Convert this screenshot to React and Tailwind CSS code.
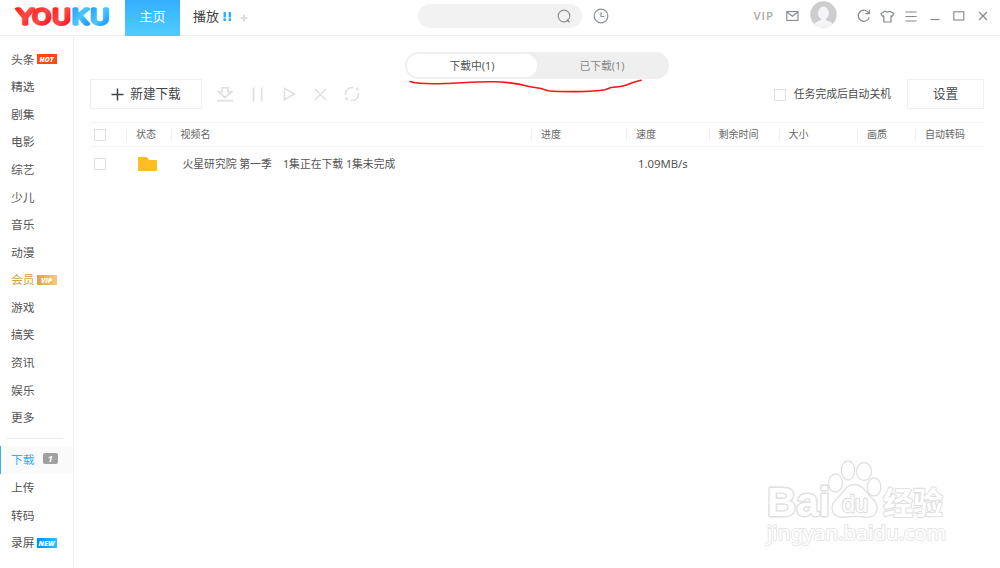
import React, { useState } from 'react';

const CHANNELS = [
    { name: '头条', tag: 'HOT' },
    { name: '精选' },
    { name: '剧集' },
    { name: '电影' },
    { name: '综艺' },
    { name: '少儿' },
    { name: '音乐' },
    { name: '动漫' },
    { name: '会员', tag: 'VIP' },
    { name: '游戏' },
    { name: '搞笑' },
    { name: '资讯' },
    { name: '娱乐' },
    { name: '更多' },
];

const TOOLS = [
    { name: '下载', count: 1 },
    { name: '上传' },
    { name: '转码' },
    { name: '录屏', tag: 'NEW' },
];

const COLUMNS = ['状态', '视频名', '进度', '速度', '剩余时间', '大小', '画质', '自动转码'];

const TAG_COLORS = {
    HOT: 'bg-[#ff4a12]',
    VIP: 'bg-linear-to-r from-[#dba53c] to-[#f9cb72]',
    NEW: 'bg-linear-to-r from-[#008cff] to-[#2fc0ff]',
};

const GRID = 'grid grid-cols-[36px_44.5px_360.5px_95px_82.5px_70px_78.5px_58px_69px] items-center';

function Logo() {
    return (
        <svg width="98" height="22" viewBox="0 0 98 22" className="ml-[13px] shrink-0">
            <defs>
                <linearGradient id="red" x1="0" y1="0" x2="1" y2="1">
                    <stop offset="0" stopColor="#ff1a12" />
                    <stop offset="0.5" stopColor="#ff4a4a" />
                    <stop offset="1" stopColor="#f5000c" />
                </linearGradient>
                <linearGradient id="blue" x1="0" y1="0" x2="1" y2="1">
                    <stop offset="0" stopColor="#169bff" />
                    <stop offset="0.5" stopColor="#4bc6ff" />
                    <stop offset="1" stopColor="#1088ff" />
                </linearGradient>
            </defs>
            <g fontFamily="Inter, sans-serif" fontSize="19.5" fontWeight="300" strokeWidth="3.3" strokeLinejoin="round" strokeLinecap="round">
                <text x="3.5" y="18.5" textLength="17.5" lengthAdjust="spacingAndGlyphs" fill="url(#red)" stroke="url(#red)">Y</text>
                <text x="19.5" y="18.5" textLength="18.5" lengthAdjust="spacingAndGlyphs" fill="url(#red)" stroke="url(#red)">O</text>
                <text x="39.5" y="18.5" textLength="18" lengthAdjust="spacingAndGlyphs" fill="url(#red)" stroke="url(#red)">U</text>
                <text x="59" y="18.5" textLength="16.5" lengthAdjust="spacingAndGlyphs" fill="url(#blue)" stroke="url(#blue)">K</text>
                <text x="77.5" y="18.5" textLength="18.5" lengthAdjust="spacingAndGlyphs" fill="url(#blue)" stroke="url(#blue)">U</text>
            </g>
        </svg>
    );
}

function NavItem({ name, tag, count }) {
    const color = count ? 'text-[#35b0fb]' : tag === 'VIP' ? 'text-[#d8a13a]' : 'text-[#555]';
    return (
        <a className={`flex h-[27.6px] items-center pl-[11px] text-[11.8px] ${color}`}>
            {name}
            {tag && (
                <span className={`ml-0.5 flex h-2.5 w-5 items-center justify-center font-['Open_Sans'] text-[7px] leading-none font-extrabold italic text-white ${TAG_COLORS[tag]}`}>
                    {tag}
                </span>
            )}
            {count && (
                <span className="mb-0.5 ml-[8px] flex h-[11px] w-[15px] items-center justify-center rounded-[2px] bg-[#a0a0a0] font-['Open_Sans'] text-[9px] leading-none font-bold italic text-white">
                    {count}
                </span>
            )}
        </a>
    );
}

function Checkbox() {
    return <span className="block size-3 shrink-0 border border-[#dde1e1] bg-white" />;
}

function Header() {
    return (
        <header className="flex h-9 items-center border-b border-[#f1f1f1]">
            <div className="flex h-9 w-[125px] shrink-0 items-center pb-1">
                <Logo />
            </div>
            <div className="flex h-9 w-[55px] shrink-0 items-center justify-center bg-linear-to-b from-[#34b0ff] to-[#50ccff] pb-[2px] text-[13px] text-white">
                主页
            </div>
            <div className="flex w-[238px] shrink-0 items-center pb-[2px] pl-[13px] text-[13px] text-[#444]">
                播放
                <svg width="9" height="9" viewBox="0 0 9 9" className="ml-1" fill="none" stroke="#25b1ff" strokeWidth="2.4">
                    <path d="M1.7 0V9M6.8 0V9" strokeDasharray="5.5 0.7" />
                </svg>
                <svg width="8" height="8" viewBox="0 0 8 8" className="ml-2 mt-0.5" stroke="#d3d6da" strokeWidth="1.6">
                    <path d="M4 .5V7.5M.5 4H7.5" />
                </svg>
            </div>
            <div className="mb-1 flex h-6 w-[164px] shrink-0 items-center justify-end rounded-full bg-[#f2f2f2] pr-[11px]">
                <svg width="14" height="14" viewBox="0 0 14 14" fill="none" stroke="#8d9194" strokeWidth="1.2">
                    <circle cx="7" cy="7" r="5.8" />
                    <path d="M9.6 10.6L12.5 13.2" strokeWidth="1.5" />
                </svg>
            </div>
            <svg width="16" height="16" viewBox="0 0 16 16" className="mb-1 ml-[11px] shrink-0" fill="none" stroke="#8d9194" strokeWidth="1.2">
                <circle cx="8" cy="8" r="6.8" />
                <path d="M8 4.2V8.5H11.4" />
            </svg>
            <div className="mb-[3px] ml-auto flex shrink-0 items-center text-[#84888b]">
                <span className="font-['Open_Sans'] text-[11.5px] font-semibold tracking-[0.9px] text-[#a9a9a9]">VIP</span>
                <svg width="13" height="10" viewBox="0 0 13 10" className="ml-3" fill="none" stroke="currentColor" strokeWidth="1.1">
                    <rect x=".8" y=".6" width="11.2" height="8.8" />
                    <path d="M1 1L6.4 5.3L11.8 1" />
                </svg>
                <svg width="27" height="27" viewBox="0 0 27 27" className="-my-1 -mt-2 ml-[11px]">
                    <defs>
                        <clipPath id="avatar"><circle cx="13.5" cy="13.5" r="13.2" /></clipPath>
                    </defs>
                    <g clipPath="url(#avatar)">
                        <rect width="27" height="27" fill="#cdcdcd" />
                        <ellipse cx="13.5" cy="12.2" rx="5.4" ry="6.6" fill="#f4f4f6" />
                        <path d="M11 16H16V19L21.5 21.6Q23 22.6 23 27H4Q4 22.6 5.5 21.6L11 19Z" fill="#f4f4f6" />
                    </g>
                </svg>
                <svg width="14" height="14" viewBox="0 0 14 14" className="ml-5" fill="none" stroke="currentColor" strokeWidth="1.2">
                    <path d="M11.7 4A5.6 5.6 0 1 0 12.2 8.4" />
                    <path d="M12.3 .8V4.7H8.4" />
                </svg>
                <svg width="15" height="13" viewBox="0 0 15 13" className="ml-[9px]" fill="none" stroke="currentColor" strokeWidth="1.2" strokeLinejoin="round">
                    <path d="M5 1.2Q7.4 3 9.8 1.2L13.8 3.6L12.4 6.2L11 5.8V12H3.8V5.8L2.4 6.2L1 3.6Z" />
                </svg>
                <svg width="12" height="11" viewBox="0 0 12 11" className="ml-[10px]" stroke="currentColor" strokeWidth="1.1">
                    <path d="M.5 1H11.5M.5 5.5H11.5M.5 10H11.5" />
                </svg>
                <svg width="10" height="11" viewBox="0 0 10 11" className="ml-[13px]" stroke="currentColor" strokeWidth="1.2">
                    <path d="M.5 8.5H9.5" />
                </svg>
                <svg width="12" height="10" viewBox="0 0 12 10" className="ml-[13px]" fill="none" stroke="currentColor" strokeWidth="1.1">
                    <rect x=".8" y=".8" width="10" height="8.2" />
                </svg>
                <svg width="10" height="10" viewBox="0 0 10 10" className="ml-[13px] mr-3" stroke="currentColor" strokeWidth="1.2">
                    <path d="M1 1L9 9M9 1L1 9" />
                </svg>
            </div>
        </header>
    );
}

function Toolbar() {
    return (
        <div className="flex h-[30px] items-center">
            <button className="flex h-[30px] w-28 items-center justify-center border border-[#f0f0f0] pt-px text-[12.6px] text-[#3f4448]">
                <svg width="13" height="13" viewBox="0 0 13 13" className="mr-1.5" stroke="#3f4448" strokeWidth="1.5">
                    <path d="M6.5 .5V12.5M.5 6.5H12.5" />
                </svg>
                新建下载
            </button>
            <div className="flex items-center text-[#e0e0e0]">
                <svg width="18" height="16" viewBox="0 0 18 16" className="ml-[13.5px]" fill="none" stroke="currentColor" strokeWidth="1.7">
                    <path d="M6 1.8H12V5.8H15.5L9 11.5L2.5 5.8H6Z" />
                    <path d="M1 14.7H17" />
                </svg>
                <svg width="12" height="15" viewBox="0 0 12 15" className="ml-[18px]" stroke="currentColor" strokeWidth="1.7">
                    <path d="M1.5 .5V14.5M9.7 .5V14.5" />
                </svg>
                <svg width="13" height="14" viewBox="0 0 13 14" className="ml-[19.5px]" fill="none" stroke="currentColor" strokeWidth="1.6">
                    <path d="M1.5 1.4L11.5 7L1.5 12.6Z" />
                </svg>
                <svg width="13" height="13" viewBox="0 0 13 13" className="ml-[18px]" stroke="currentColor" strokeWidth="1.6">
                    <path d="M1 1L12 12M12 1L1 12" />
                </svg>
                <svg width="16" height="16" viewBox="0 0 16 16" className="ml-[17px]" fill="none" stroke="currentColor" strokeWidth="1.6">
                    <path d="M1.5 8.8A6.5 6.5 0 0 1 9.2 1.6M14.5 7.2A6.5 6.5 0 0 1 6.8 14.4" />
                    <path d="M1.7 12L3.6 13.9M12.4 2.100L14.300 4" strokeWidth="2.4" />
                </svg>
            </div>
            <label className="ml-auto flex items-center gap-2 pt-px text-[10.8px] text-[#4b4b4b]">
                <Checkbox />
                任务完成后自动关机
            </label>
            <button className="ml-4 h-[30px] w-[77px] border border-[#f0f0f0] pt-px text-[12.6px] text-[#4b4f53]">设置</button>
        </div>
    );
}

function Watermark() {
    return (
        <svg width="190" height="96" viewBox="0 0 190 96" className="pointer-events-none absolute left-[762px] top-[456px]" fill="#fff" stroke="#e0e0e0" strokeLinejoin="round">
            {/* wide grey outline below, white body painted over it */}
            <g fontWeight="700" strokeWidth="2.8" paintOrder="stroke">
                <text x="5" y="60" fontSize="40" fontFamily="'Liberation Sans', sans-serif" textLength="63" lengthAdjust="spacingAndGlyphs">Bai</text>
                <text x="121" y="58" fontSize="31" fontFamily="'Noto Sans CJK SC', sans-serif" textLength="60" lengthAdjust="spacingAndGlyphs" strokeWidth="2.2">经验</text>
            </g>
            <g strokeWidth="1.3">
                <ellipse cx="73.5" cy="27" rx="7" ry="9" />
                <ellipse cx="86" cy="14.5" rx="6.8" ry="9.5" />
                <ellipse cx="102" cy="15.5" rx="7.5" ry="9" />
                <ellipse cx="112" cy="31" rx="6.8" ry="9" />
                <path d="M92.5 28.5C99 28.5 103 34 107 39C112 44 116 47 115 54C114 60 108 62 101 61C95 60 91 60 85 61C77 62 70 60 70 52C70 45 76 42 80 37C84 32 86 28.5 92.5 28.5Z" />
            </g>
            <text x="80" y="56" fontSize="24" fontFamily="'Liberation Sans', sans-serif" textLength="26" lengthAdjust="spacingAndGlyphs" strokeWidth="2.4" paintOrder="stroke">du</text>
            <text x="5" y="84" fontSize="20" fontFamily="'Noto Sans', sans-serif" textLength="179" lengthAdjust="spacingAndGlyphs" strokeWidth="1.9" stroke="#e6e6e6" paintOrder="stroke">jingyan.baidu.com</text>
        </svg>
    );
}

export default function App() {
    const [tab, setTab] = useState('downloading');

    return (
        <div className="relative flex h-[568px] w-[1000px] flex-col overflow-hidden bg-white font-['Noto_Sans','Noto_Sans_CJK_SC',sans-serif]">
            <Header />
            <div className="flex flex-1">
                <nav className="w-[74px] shrink-0 border-r border-[#efefef] pt-[9.6px]">
                    {CHANNELS.map((c) => (
                        <NavItem key={c.name} {...c} />
                    ))}
                    <div className="ml-[7px] mb-[7px] mt-[6px] h-px w-14 bg-[#ebebeb]" />
                    {TOOLS.map((t) => (
                        <div key={t.name} className={t.count ? 'mb-[0.8px] bg-[#fafafa] shadow-[inset_1px_0_0_#35b0fb]' : ''}>
                            <NavItem {...t} />
                        </div>
                    ))}
                </nav>

                <main className="flex-1 pl-4 pr-4 pt-4">
                    <div className="ml-[315px] flex h-[27px] w-[264px] rounded-full bg-[#efefef] p-0.5 text-[10.8px]">
                        <button
                            onClick={() => setTab('downloading')}
                            className={`flex-1 rounded-full pt-0.5 ${tab === 'downloading' ? 'bg-white text-[#555]' : 'text-[#888]'}`}
                        >
                            下载中(1)
                        </button>
                        <button
                            onClick={() => setTab('done')}
                            className={`flex-1 rounded-full pt-0.5 ${tab === 'done' ? 'bg-white text-[#555]' : 'text-[#888]'}`}
                        >
                            已下载(1)
                        </button>
                    </div>

                    <Toolbar />

                    {/* Task table */}
                    <div className={`${GRID} mt-[13px] h-[25px] border-y border-[#f3f3f3] text-[10px] text-[#666]`}>
                        <div className="pl-1"><Checkbox /></div>
                        {COLUMNS.map((col) => (
                            <div key={col} className="flex h-3 items-center whitespace-nowrap border-l border-[#efefef] pl-[9px]">
                                {col}
                            </div>
                        ))}
                    </div>
                    <div className={`${GRID} h-[34px] text-[10.8px] text-[#555]`}>
                        <div className="pl-1"><Checkbox /></div>
                        <div className="pl-3">
                            <svg width="19" height="14" viewBox="0 0 19 14" fill="#ffbd23">
                                <path d="M0 1Q0 0 1 0H9L11 3H18Q19 3 19 4V13Q19 14 18 14H1Q0 14 0 13Z" />
                            </svg>
                        </div>
                        <div className="whitespace-pre pl-3">火星研究院 第一季    1集正在下载 1集未完成</div>
                        <div />
                        <div className="pl-3 text-[11.3px]">1.09MB/s</div>
                    </div>
                </main>
            </div>

            {/* Hand-drawn underline below the tabs */}
            <svg width="240" height="18" viewBox="0 0 240 18" className="pointer-events-none absolute left-[406px] top-[78px]" fill="none" stroke="#f5161b" strokeWidth="1.6" strokeLinecap="round" strokeLinejoin="round">
                <path d="M4 3.5C12 6 25 6 39 5.5C55 5 70 3.6 87 3.8C105 4 114 6 123 8.5L135 10.5L142 12.8C155 14 185 14.2 199 11.8L205 9.5C213 9.2 219 8 225 5.3C229 3.7 232 3 235 2.3" />
            </svg>
            <Watermark />
        </div>
    );
}
